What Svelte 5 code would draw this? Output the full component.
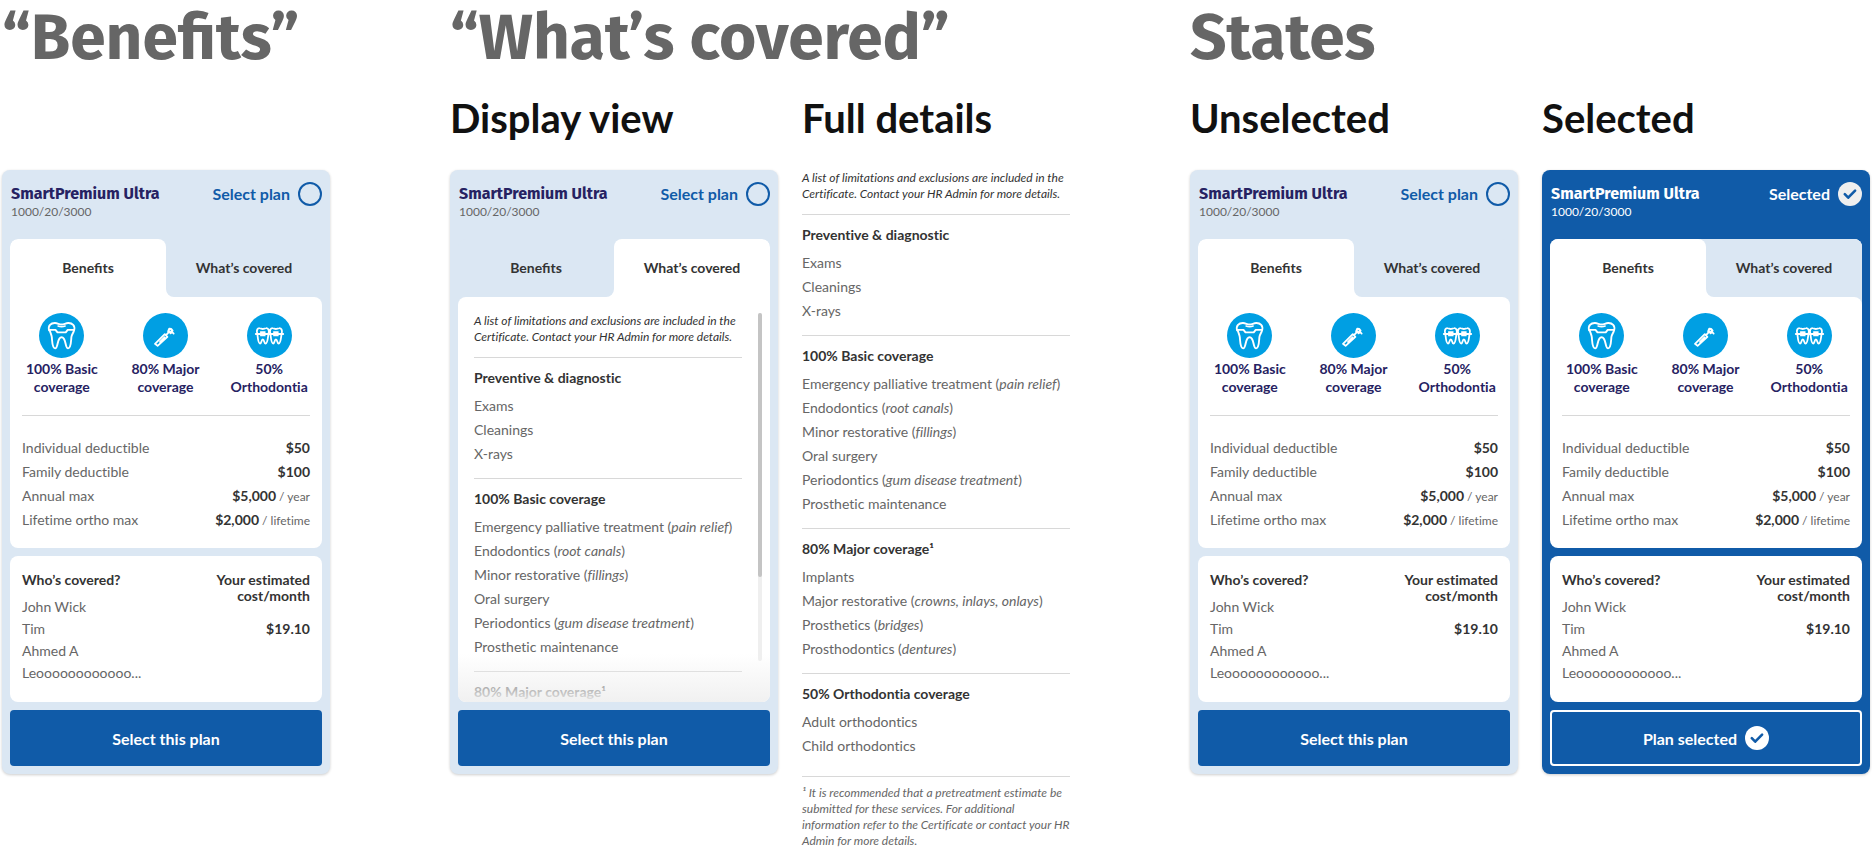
<script>
  let cards = $state([
    { id: 'benefits', tab: 'benefits', selected: false },
    { id: 'covered', tab: 'covered', selected: false },
    { id: 'unselected', tab: 'benefits', selected: false },
    { id: 'selected', tab: 'benefits', selected: true }
  ]);

  const highlights = [
    { icon: 'tooth', top: '100% Basic', bottom: 'coverage' },
    { icon: 'drill', top: '80% Major', bottom: 'coverage' },
    { icon: 'braces', top: '50%', bottom: 'Orthodontia' }
  ];

  const limits = [
    { label: 'Individual deductible', amount: '$50' },
    { label: 'Family deductible', amount: '$100' },
    { label: 'Annual max', amount: '$5,000', per: 'year' },
    { label: 'Lifetime ortho max', amount: '$2,000', per: 'lifetime' }
  ];

  const members = ['John Wick', 'Tim', 'Ahmed A', 'Leoooooooooooo...'];

  const coverage = [
    {
      title: 'Preventive & diagnostic',
      items: [{ name: 'Exams' }, { name: 'Cleanings' }, { name: 'X-rays' }]
    },
    {
      title: '100% Basic coverage',
      items: [
        { name: 'Emergency palliative treatment', note: 'pain relief' },
        { name: 'Endodontics', note: 'root canals' },
        { name: 'Minor restorative', note: 'fillings' },
        { name: 'Oral surgery' },
        { name: 'Periodontics', note: 'gum disease treatment' },
        { name: 'Prosthetic maintenance' }
      ]
    },
    {
      title: '80% Major coverage¹',
      items: [
        { name: 'Implants' },
        { name: 'Major restorative', note: 'crowns, inlays, onlays' },
        { name: 'Prosthetics', note: 'bridges' },
        { name: 'Prosthodontics', note: 'dentures' }
      ]
    },
    {
      title: '50% Orthodontia coverage',
      items: [{ name: 'Adult orthodontics' }, { name: 'Child orthodontics' }]
    }
  ];

  // the card only has room for two sections and the title of the third
  const preview = [...coverage.slice(0, 2), { title: coverage[2].title, items: [] }];
</script>

{#snippet icon(name)}
  <svg class="icon" viewBox="0 0 45 45" aria-hidden="true">
    <circle cx="22.5" cy="22.5" r="22.5" fill="#009fe3" />
    <g fill="none" stroke="#fff" stroke-linecap="round" stroke-linejoin="round">
      {#if name === 'tooth'}
        <path stroke-width="1.9" d="M10.200 17.500C8.600 12.500 12 9.900 16 10c2.800.1 4 1.500 6.600 1.500s3.800-1.400 6.600-1.500c4-.1 7.400 2.500 5.800 7.500-.6 2.500-2.300 4-2.600 6.500-.4 4-.3 11.300-3.300 11.400-3.300.1-1.600-11.100-6.500-11.100s-3.200 11.200-6.500 11.100c-3-.1-2.900-7.400-3.300-11.400-.3-2.500-1.400-4-2-6.500Z" />
        <path stroke-width="1.900" d="M10.200 16.900h6.300l2 2.500h8.200l2-2.500H35" />
        <path stroke-width="1.400" d="M19 13c2 .8 5.200.8 7.200 0" />
      {:else if name === 'drill'}
        <path stroke-width="1.800" d="m12 30.800 9.800-9.600 2.600 2.600-9.800 9.100zM17 28.800l4.500-4.500M23.300 21.900l2.700-3" />
        <path stroke-width="2.200" d="m25.300 18.300 1-2.500 1.900.3 1.200 1.500-1.700 2z" />
        <path stroke-width="1.700" d="m29 18.800 1.700 1.800M27.400 20.400l1.200-.9" />
      {:else}
        <g stroke-width="1.800">
          <path d="M10.200 20.500c-1-3.600.3-5.400 2.400-5.300 1.300 0 1.900.8 3.200.8s1.900-.8 3.200-.8c2.200-.1 3.500 1.700 2.600 5.300-.7 2.300-.7 10-3 10-1.800 0-1.100-4-2.800-4s-1 4-2.800 4c-2.300 0-2.100-7.700-2.800-10ZM23.300 20.500c-1-3.600.3-5.400 2.400-5.300 1.300 0 1.900.8 3.200.8s1.900-.8 3.200-.8c2.200-.1 3.500 1.700 2.600 5.300-.7 2.300-.7 10-3 10-1.800 0-1.100-4-2.800-4s-1 4-2.800 4c-2.300 0-2.100-7.700-2.800-10Z" />
          <path d="M8.800 21H36.200" />
        </g>
        <path fill="#fff" stroke="none" d="M13.100 18.300h5.400v5h-5.400zM26.200 18.300h5.400v5h-5.400z" />
      {/if}
    </g>
  </svg>
{/snippet}

{#snippet check(disc)}
  <svg class="check" viewBox="0 0 24 24" aria-hidden="true">
    <circle cx="12" cy="12" r="12" fill={disc} />
    <path d="m6.800 12.200 3.400 3.500 6.900-7" fill="none" stroke="#105ba8" stroke-width="2.600" stroke-linecap="round" stroke-linejoin="round" />
  </svg>
{/snippet}

{#snippet details(sections, footnote)}
  <div class="details">
    <p class="note">A list of limitations and exclusions are included in the Certificate. Contact your HR Admin for more details.</p>
    {#each sections as section}
      <section>
        <h4>{section.title}</h4>
        <ul>
          {#each section.items as item}
            <li>{item.name}{#if item.note}{' '}(<em>{item.note}</em>){/if}</li>
          {/each}
        </ul>
      </section>
    {/each}
    {#if footnote}
      <p class="footnote">{footnote}</p>
    {/if}
  </div>
{/snippet}

{#snippet planCard(card)}
  <article class="card" class:selected={card.selected}>
    <header class="card-head">
      <div class="plan">
        <h3>SmartPremium Ultra</h3>
        <p>1000/20/3000</p>
      </div>
      <label class="pick">
        {card.selected ? 'Selected' : 'Select plan'}
        <span class="pick-box">
          <input type="checkbox" bind:checked={card.selected} />
          {#if card.selected}{@render check('#efefef')}{/if}
        </span>
      </label>
    </header>

    <div class="plan-body">
      <div class="tabs" role="tablist">
        <button role="tab" class:active={card.tab === 'benefits'} aria-selected={card.tab === 'benefits'} onclick={() => (card.tab = 'benefits')}>Benefits</button>
        <button role="tab" class:active={card.tab === 'covered'} aria-selected={card.tab === 'covered'} onclick={() => (card.tab = 'covered')}>What’s covered</button>
      </div>

      {#if card.tab === 'benefits'}
        <div class="panel benefits" role="tabpanel">
          <ul class="highlights">
            {#each highlights as item}
              <li>
                {@render icon(item.icon)}
                <span>{item.top}<br />{item.bottom}</span>
              </li>
            {/each}
          </ul>
          <table>
            <tbody>
              {#each limits as row}
                <tr>
                  <th scope="row">{row.label}</th>
                  <td><strong>{row.amount}</strong>{#if row.per}<small>{' '}/ {row.per}</small>{/if}</td>
                </tr>
              {/each}
            </tbody>
          </table>
        </div>
      {:else}
        <div class="panel covered" role="tabpanel">
          {@render details(preview)}
          <div class="track"><div class="thumb"></div></div>
          <div class="fade"></div>
        </div>
      {/if}
    </div>

    {#if card.tab === 'benefits'}
      <div class="panel who">
        <div>
          <h4>Who’s covered?</h4>
          <ul>
            {#each members as member}
              <li>{member}</li>
            {/each}
          </ul>
        </div>
        <div class="cost">
          <h4>Your estimated<br />cost/month</h4>
          <strong>$19.10</strong>
        </div>
      </div>
    {/if}

    <button class="submit" onclick={() => (card.selected = !card.selected)}>
      {#if card.selected}
        Plan selected {@render check('#fff')}
      {:else}
        Select this plan
      {/if}
    </button>
  </article>
{/snippet}

<main>
  <section class="group single">
    <h1>“Benefits”</h1>
    <div class="columns">
      <div class="column">
        <h2>&nbsp;</h2>
        {@render planCard(cards[0])}
      </div>
    </div>
  </section>

  <section class="group middle">
    <h1>“What’s covered”</h1>
    <div class="columns">
      <div class="column">
        <h2>Display view</h2>
        {@render planCard(cards[1])}
      </div>
      <div class="column narrow">
        <h2>Full details</h2>
        {@render details(coverage, '¹ It is recommended that a pretreatment estimate be submitted for these services. For additional information refer to the Certificate or contact your HR Admin for more details.')}
      </div>
    </div>
  </section>

  <section class="group double">
    <h1>States</h1>
    <div class="columns">
      <div class="column">
        <h2>Unselected</h2>
        {@render planCard(cards[2])}
      </div>
      <div class="column">
        <h2>Selected</h2>
        {@render planCard(cards[3])}
      </div>
    </div>
  </section>
</main>

<style>
  :global(body) {
    background: #fff;
  }

  main {
    display: flex;
    gap: 120px;
    padding: 0 2px;
    font-family: Lato, "Open Sans", sans-serif;
    font-size: 14px;
    font-variant-ligatures: none;
    color: #666;
  }

  h1, h2, h3, h4, p, ul { margin: 0; padding: 0; }
  ul { list-style: none; }
  button { font-family: inherit; border: 0; cursor: pointer; }

  .group { min-width: 0; }
  .single { flex: 328 1 0; }
  .middle { flex: 620 1 0; }
  .double { flex: 680 1 0; }

  h1 {
    font-family: "Fira Sans", "Noto Sans", sans-serif;
    font-size: 64px;
    line-height: 76px;
    font-weight: 700;
    font-variant-ligatures: normal;
    white-space: nowrap;
  }

  h2 {
    font-size: 40px;
    line-height: 48px;
    font-weight: 700;
    color: #111;
    padding: 18px 0 28px;
    white-space: nowrap;
  }

  .columns {
    display: flex;
    align-items: flex-start;
    gap: 24px;
  }

  .column { flex: 328 1 0; min-width: 0; }
  .narrow { flex-grow: 268; }

  .card {
    padding: 8px;
    background: #dbe7f3;
    border-radius: 8px;
    box-shadow: 0 1px 3px rgba(0, 0, 0, 0.2);
  }

  .card.selected { background: #105ba8; }

  .card-head {
    display: flex;
    justify-content: space-between;
    align-items: flex-start;
    padding: 4px 0 19px;
  }

  .plan { padding: 2px 0 0 1px; }

  h3 {
    font-family: "Fira Sans", "Noto Sans", sans-serif;
    font-size: 16px;
    line-height: 20px;
    font-weight: 700;
    color: #262262;
  }

  .plan p {
    font-size: 12px;
    line-height: 16px;
  }

  .pick {
    display: flex;
    align-items: center;
    gap: 8px;
    font-size: 16px;
    line-height: 24px;
    font-weight: 700;
    color: #105ba8;
    cursor: pointer;
  }

  .pick-box { display: grid; }
  .pick-box > :global(*) { grid-area: 1 / 1; }

  .pick input {
    appearance: none;
    box-sizing: border-box;
    width: 24px;
    height: 24px;
    margin: 0;
    border: 2px solid #105ba8;
    border-radius: 50%;
  }

  .check {
    display: block;
    width: 24px;
    height: 24px;
    pointer-events: none;
  }

  .selected h3, .selected .plan p, .selected .pick { color: #fff; }

  .plan-body {
    border-radius: 8px;
    background: linear-gradient(#dbe7f3 80px, transparent 80px);
  }

  .tabs {
    display: grid;
    grid-template-columns: 1fr 1fr;
    overflow: hidden;
    border-radius: 8px 8px 0 0;
    background: linear-gradient(#dbe7f3 50%, #fff 50%);
  }

  .tabs button {
    padding: 0;
    font-size: 14px;
    line-height: 58px;
    font-weight: 700;
    color: #333;
    background: #dbe7f3;
  }

  .tabs button:first-child { border-radius: 0 0 8px 0; }
  .tabs button:last-child { border-radius: 0 0 0 8px; }
  .tabs button.active { background: #fff; border-radius: 8px 8px 0 0; }

  .panel {
    background: #fff;
    border-radius: 8px;
  }

  .benefits {
    border-top-left-radius: 0;
    padding: 16px 0;
  }

  .highlights {
    display: grid;
    grid-template-columns: repeat(3, 1fr);
    padding-right: 1px;
  }

  .highlights li {
    display: flex;
    flex-direction: column;
    align-items: center;
    gap: 2px;
    line-height: 18px;
    font-weight: 700;
    text-align: center;
    color: #262262;
  }

  .icon { width: 45px; height: 45px; }

  table {
    width: calc(100% - 24px);
    margin: 19px 12px 0;
    border-top: 1px solid #d8d8d8;
    border-spacing: 0;
    padding-top: 20px;
  }

  th, td { padding: 0; line-height: 24px; }
  th { text-align: left; font-weight: 400; }
  td { text-align: right; }
  td small { font-size: 12px; line-height: 16px; }
  strong { font-weight: 700; color: #333; }

  h4 {
    font-size: 14px;
    line-height: 16px;
    font-weight: 700;
    color: #333;
  }

  .who {
    display: flex;
    justify-content: space-between;
    margin-top: 8px;
    padding: 16px 12px 18px;
  }

  .who ul { padding-top: 8px; }
  .who li { line-height: 22px; }

  .cost {
    display: flex;
    flex-direction: column;
    gap: 14px;
    text-align: right;
    line-height: 22px;
  }

  .submit {
    display: flex;
    justify-content: center;
    align-items: center;
    gap: 8px;
    box-sizing: border-box;
    width: 100%;
    height: 56px;
    margin-top: 8px;
    font-size: 16px;
    font-weight: 700;
    color: #fff;
    background: #105ba8;
    border-radius: 4px;
  }

  .selected .submit { border: 2px solid #fff; }

  .covered {
    position: relative;
    display: flex;
    justify-content: space-between;
    box-sizing: border-box;
    height: 405px;
    padding: 16px 8px 0 16px;
    border-top-right-radius: 0;
    overflow: hidden;
  }

  .covered .details { flex: 0 1 268px; }

  .track {
    width: 4px;
    height: 348px;
    background: #efefef;
    border-radius: 2px;
  }

  .thumb {
    height: 264px;
    background: #c4c4c4;
    border-radius: 2px;
  }

  .fade {
    position: absolute;
    left: 0;
    right: 0;
    bottom: 0;
    height: 48px;
    background: linear-gradient(rgba(255, 255, 255, 0), rgba(240, 240, 240, 0.95));
  }

  .note {
    font-size: 12px;
    line-height: 16px;
    font-style: italic;
    color: #333;
    padding-bottom: 12px;
  }

  .details section {
    border-top: 1px solid #d8d8d8;
    padding: 12px 0;
  }

  .details ul { padding-top: 8px; }
  .details li { line-height: 24px; white-space: nowrap; }

  .footnote {
    margin-top: 6px;
    padding-top: 8px;
    border-top: 1px solid #d8d8d8;
    font-size: 12px;
    line-height: 16px;
    font-style: italic;
  }
</style>
